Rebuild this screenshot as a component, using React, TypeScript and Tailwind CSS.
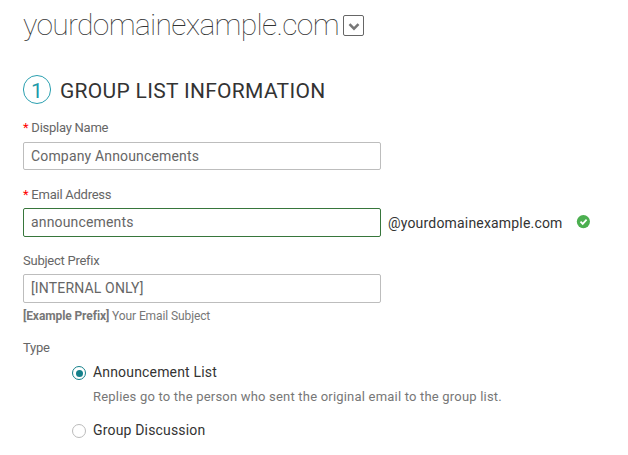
import React from 'react';

function Field({ label, value, required, valid, inputClass = 'mt-1 h-[29px]' }: { label: string; value: string; required?: boolean; valid?: boolean; inputClass?: string }) {
  return (
    <div>
      <div className="flex h-[18px] items-center text-[13px] leading-[18px] tracking-[-0.25px] text-[#666]">
        {required && <span className="mr-[3px] text-[#f00]">*</span>}
        {label}
      </div>
      <div className={`flex w-[358px] items-center rounded-[2px] border pl-[7px] text-[14px] tracking-[0.16px] text-[#666] ${inputClass} ${valid ? 'border-[#37763b]' : 'border-[#bdbdbd]'}`}>
        {value}
      </div>
    </div>
  );
}

export default function App() {
  return (
    <main className="flex h-[455px] w-[628px] flex-col bg-white pl-[23px] font-['Roboto',sans-serif] text-[#333]">
      <header className="flex h-[50px] items-center">
        <h1 className="w-[315px] whitespace-nowrap text-[30px] font-thin leading-[50px] tracking-[-0.67px]">yourdomainexample.com</h1>
        <span className="ml-[5px] flex h-[21px] w-[21px] items-center justify-center rounded-[2px] border border-[#666]">
          <svg className="mt-[3px]" width="12" height="8" viewBox="0 0 12 8" fill="none" stroke="#777" strokeWidth="2.500"><path d="M1.500 1.200 6 5.700l4.500-4.500" /></svg>
        </span>
      </header>
      <div className="mt-[25px] flex h-[29px] items-center">
        <span className="flex h-[29px] w-7 items-center justify-center rounded-full border border-[#2ba0b0] pt-[3px] text-[21px] leading-6 text-[#219aaa]">1</span>
        <h2 className="ml-[9px] pt-[3px] text-[21px] leading-6 tracking-[0.3px]">GROUP LIST INFORMATION</h2>
      </div>
      <section className="mt-[15px] flex flex-col gap-[15px]">
        <Field label="Display Name" value="Company Announcements" required inputClass="mt-[5px] mb-px h-[28px]" />
        <div className="flex items-end">
          <Field label="Email Address" value="announcements" required valid />
          <span className="ml-[7px] flex h-[27px] w-[175px] items-center text-[14px] tracking-[0.18px]">@yourdomainexample.com</span>
          <svg className="mb-2 ml-[13px]" width="14" height="14" viewBox="0 0 14 14"><circle cx="7.400" cy="6.600" r="6.600" fill="#4caf50" /><path d="m4.500 6.700 2.200 2.200 3.900-4.200" fill="none" stroke="white" strokeWidth="1.800" /></svg>
        </div>
        <Field label="Subject Prefix" value="[INTERNAL ONLY]" />
      </section>
      <p className="mt-1 text-[12px] leading-[18px] tracking-[-0.1px] text-[#777]"><b>[Example Prefix]</b> Your Email Subject</p>
      <p className="mt-[14px] text-[13px] leading-[18px] tracking-[-0.25px] text-[#666]">Type</p>
      <div className="ml-[49px] mt-[7px] flex h-[18px] items-center text-[14px] tracking-[0.17px]">
        <span className="mr-[7px] flex size-[14px] items-center justify-center rounded-full border border-[#14808a]"><span className="size-[7px] rounded-full bg-[#14808a]" /></span><span className="pb-0.5">Announcement List</span>
      </div>
      <p className="ml-[70px] mt-[6px] text-[13px] leading-[18px] tracking-[0.2px] text-[#777]">Replies go to the person who sent the original email to the group list.</p>
      <div className="ml-[49px] mt-4 flex h-[18px] items-center text-[14px] tracking-[0.17px]">
        <span className="mr-[7px] size-[14px] rounded-full border border-[#bbb]" /><span className="pb-0.5">Group Discussion</span>
      </div>
    </main>
  );
}
